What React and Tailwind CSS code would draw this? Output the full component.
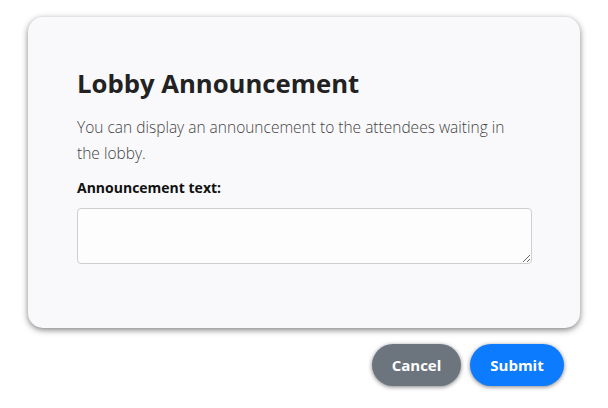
export default function App() {
  return (
    <div className="w-[608px] h-[408px] bg-white pt-[17px] px-[28px]" style={{ fontFamily: '"Open Sans", "Noto Sans", sans-serif' }}>
      <div className="h-[311px] rounded-[15px] bg-[#f9f9fb] shadow-[0_2px_6px_rgba(0,0,0,0.5)] pl-[49px] pr-[48px] pt-[49px]">
        <h1 className="text-[25.7px] leading-[36px] font-bold text-[#222]">Lobby Announcement</h1>
        <p className="mt-[12px] max-w-[445px] text-[15.5px] leading-[26px] font-light text-[#444]">
          You can display an announcement to the attendees waiting in the lobby.
        </p>
        <label className="block mt-[12px] text-[14px] leading-[20px] font-bold text-[#111]">Announcement text:</label>
        <textarea className="block mt-[10px] w-full h-[56px] rounded-[4px] border border-[#cfcfd3] bg-[#fdfdfd] outline-none" />
      </div>
      <div className="flex justify-end gap-[9px] pr-[16px] mt-[16px]">
        <button className="w-[89px] h-[42px] rounded-full bg-[#6c757d] text-white font-bold text-[15px] shadow-[0_1px_4px_rgba(0,0,0,0.5)]">Cancel</button>
        <button className="w-[94px] h-[42px] rounded-full bg-[#0d7bfd] text-white font-bold text-[15px] shadow-[0_1px_4px_rgba(0,0,0,0.5)]">Submit</button>
      </div>
    </div>
  );
}
